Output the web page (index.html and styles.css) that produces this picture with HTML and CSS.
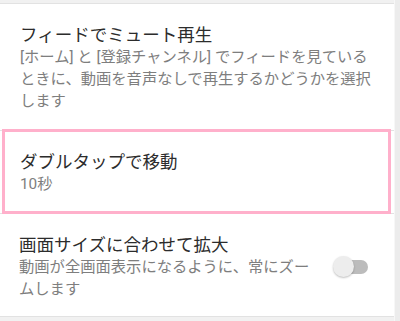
FILE: index.html
```html
<!DOCTYPE html>
<html lang="ja">
<head>
<meta charset="utf-8">
<link rel="stylesheet" href="styles.css">
</head>
<body>
<div class="page">
  <div class="list">
    <div class="row">
      <div class="text">
        <div class="title">フィードでミュート再生</div>
        <div class="desc">[ホーム] と [登録チャンネル] でフィードを見ているときに、動画を音声なしで再生するかどうかを選択します</div>
      </div>
    </div>
    <div class="row row-focus">
      <div class="text">
        <div class="title">ダブルタップで移動</div>
        <div class="desc">10秒</div>
      </div>
    </div>
    <div class="row row-switch">
      <div class="text text-narrow">
        <div class="title">画面サイズに合わせて拡大</div>
        <div class="desc">動画が全画面表示になるように、常にズームします</div>
      </div>
      <div class="switch">
        <div class="track"></div>
        <div class="thumb"></div>
      </div>
    </div>
  </div>
  <div class="scrollbar"></div>
</div>
</body>
</html>
```

FILE: styles.css
```css
html, body {
  margin: 0;
  padding: 0;
  background: #f1f1f1;
}
body {
  width: 400px;
  height: 321px;
  overflow: hidden;
  font-family: Roboto, "Noto Sans CJK JP", sans-serif;
}
.page {
  display: flex;
  align-items: flex-start;
  height: 321px;
}
.list {
  width: 394px;
  margin-top: 3px;
  border-top: 1px solid #e2e2e2;
  background: #ffffff;
}
.scrollbar {
  width: 5px;
  height: 321px;
  background: #ececec;
  border-left: 1px solid #f7f7f7;
}
.row {
  display: flex;
  align-items: center;
  padding: 20px 14px 18px 20px;
  border-bottom: 1px solid #e2e2e2;
  position: relative;
}
.row-switch {
  padding: 20px 26px 16px 19px;
}
.text {
  flex: 1;
  min-width: 0;
}
.text-narrow {
  flex: 0 0 300px;
  margin-right: auto;
}
.title {
  font-size: 17.5px;
  line-height: 22px;
  color: #2c2c2c;
}
.desc {
  font-size: 15.3px;
  line-height: 22px;
  color: #7e7e7e;
}
.row-focus::after {
  content: "";
  position: absolute;
  left: 2px;
  right: 3px;
  top: -2px;
  bottom: -1px;
  border: 3px solid #ffb0cb;
  pointer-events: none;
}
.switch {
  position: relative;
  width: 35px;
  height: 22px;
  flex: 0 0 35px;
}
.track {
  position: absolute;
  left: 3px;
  right: 0;
  top: 4px;
  height: 14px;
  border-radius: 7px;
  background: #bcbcbc;
}
.thumb {
  position: absolute;
  left: 0;
  top: 0;
  width: 21px;
  height: 21px;
  border-radius: 50%;
  background: #ededed;
  box-shadow: 0 1px 2px rgba(0, 0, 0, 0.25);
}
```
